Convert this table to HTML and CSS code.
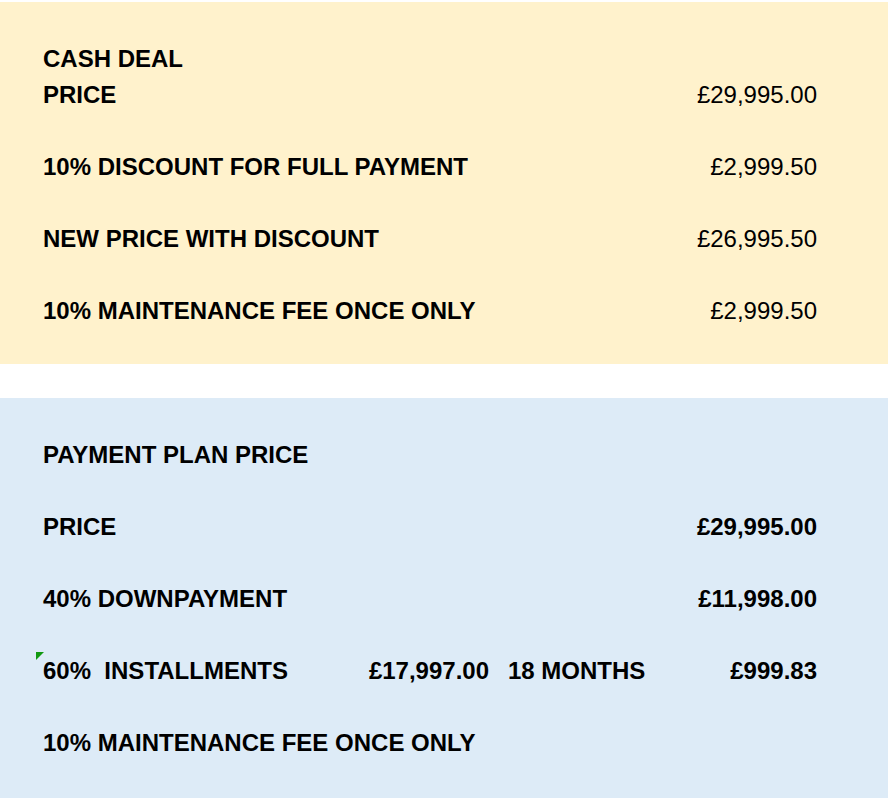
FILE: index.html
```html
<!DOCTYPE html>
<html lang="en">
<head>
<meta charset="utf-8">
<title>Pricing</title>
<link rel="stylesheet" href="styles.css">
</head>
<body>
<section class="sheet sheet-cash">
  <div class="row first"><span class="label">CASH DEAL</span></div>
  <div class="row"><span class="label">PRICE</span><span class="price">£29,995.00</span></div>
  <div class="row spaced"><span class="label">10% DISCOUNT FOR FULL PAYMENT</span><span class="price">£2,999.50</span></div>
  <div class="row spaced"><span class="label">NEW PRICE WITH DISCOUNT</span><span class="price">£26,995.50</span></div>
  <div class="row spaced"><span class="label">10% MAINTENANCE FEE ONCE ONLY</span><span class="price">£2,999.50</span></div>
</section>
<section class="sheet sheet-plan">
  <div class="row first"><span class="label">PAYMENT PLAN PRICE</span></div>
  <div class="row spaced"><span class="label">PRICE</span><span class="price">£29,995.00</span></div>
  <div class="row spaced"><span class="label">40% DOWNPAYMENT</span><span class="price">£11,998.00</span></div>
  <div class="row spaced"><span class="marker"></span><span class="label short">60%  INSTALLMENTS</span><span class="amount">£17,997.00</span><span class="months">18 MONTHS</span><span class="price">£999.83</span></div>
  <div class="row spaced"><span class="label">10% MAINTENANCE FEE ONCE ONLY</span></div>
</section>
</body>
</html>
```

FILE: styles.css
```css
html, body {
  margin: 0;
  padding: 0;
  background: #ffffff;
}

body {
  font-family: "Liberation Sans", Arial, sans-serif;
  font-size: 24px;
  color: #000000;
  width: 888px;
}

.sheet {
  display: flex;
  flex-direction: column;
  box-sizing: border-box;
}

.sheet-cash {
  margin-top: 2px;
  height: 362px;
  background: #FFF2CC;
}

.sheet-plan {
  margin-top: 34px;
  height: 400px;
  background: #DDEBF7;
}

.row {
  position: relative;
  height: 36px;
  box-sizing: border-box;
  padding: 6px 71px 0 43px;
  line-height: 30px;
  display: grid;
  grid-template-columns: 325px 121px 1fr auto;
  white-space: nowrap;
}

.row.first {
  margin-top: 36px;
}

.row.spaced {
  margin-top: 36px;
}

.label {
  grid-column: 1 / 4;
  font-weight: bold;
  white-space: pre;
}

.label.short {
  grid-column: 1 / 2;
}

.amount {
  grid-column: 2 / 3;
  text-align: right;
  font-weight: bold;
}

.months {
  grid-column: 3 / 4;
  padding-left: 19px;
  font-weight: bold;
}

.price {
  grid-column: 4 / 5;
  text-align: right;
}

.sheet-plan .price {
  font-weight: bold;
}

.marker {
  position: absolute;
  left: 36px;
  top: 2px;
  width: 0;
  height: 0;
  border-top: 8px solid #119911;
  border-right: 8px solid transparent;
}
```
